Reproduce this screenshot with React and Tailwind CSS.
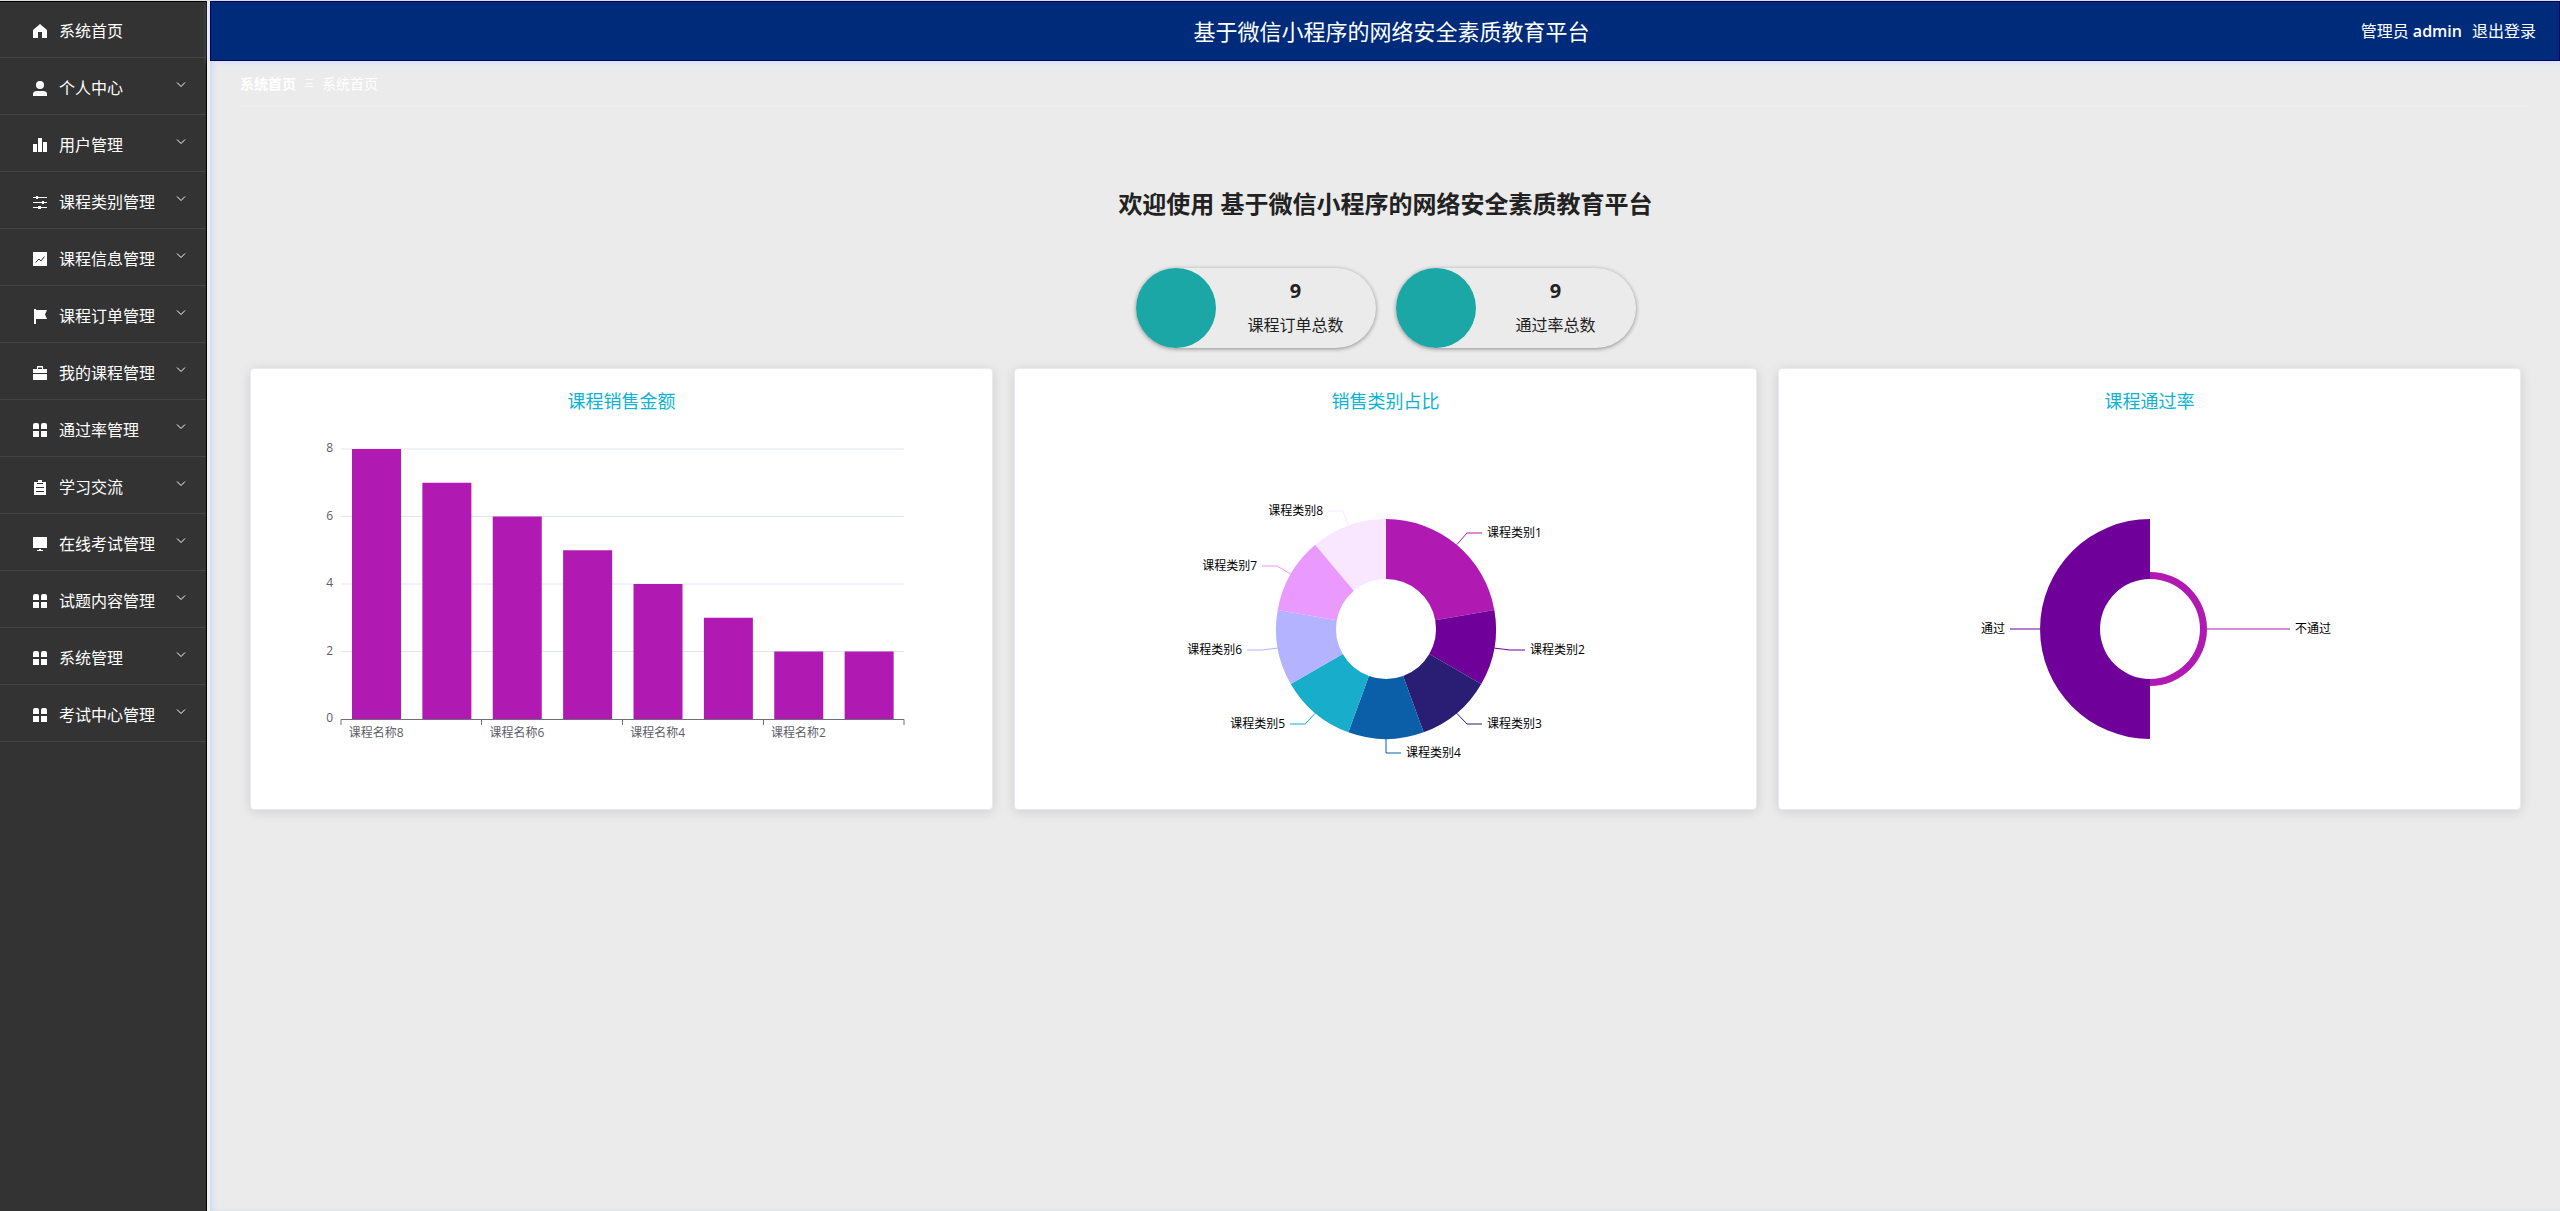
import React from 'react'

const menus = [
  { name: '系统首页', icon: 'home' },
  { name: '个人中心', icon: 'user' },
  { name: '用户管理', icon: 'histogram' },
  { name: '课程类别管理', icon: 'operation' },
  { name: '课程信息管理', icon: 'marketing' },
  { name: '课程订单管理', icon: 'flag' },
  { name: '我的课程管理', icon: 'cooperation' },
  { name: '通过率管理', icon: 'menu' },
  { name: '学习交流', icon: 'order' },
  { name: '在线考试管理', icon: 'platform' },
  { name: '试题内容管理', icon: 'menu' },
  { name: '系统管理', icon: 'menu' },
  { name: '考试中心管理', icon: 'menu' },
]

const icons = {
  home: <path d="M7 0 L14 6 V14 H9 V8 H5 V14 H0 V6 Z" />,
  user: (
    <>
      <circle cx="7" cy="4" r="4" />
      <path d="M0 15 V13 Q0 10 4 10 H10 Q14 10 14 13 V15 Z" />
    </>
  ),
  histogram: <path d="M0 6 H4 V14 H0 Z M5 0 H9 V14 H5 Z M10 4 H14 V14 H10 Z" />,
  operation: (
    <path d="M0 2 H14 V3 H0 Z M0 7 H14 V8 H0 Z M0 12 H14 V13 H0 Z M3 1 H5 V4 H3 Z M9 6 H11 V9 H9 Z M5 11 H8 V14 H5 Z" />
  ),
  marketing: (
    <>
      <path d="M0 0 H14 V14 H0 Z" />
      <path d="M2.5 10.5 L6 7 L8 9 L11.5 4.5" fill="none" stroke="#333" />
    </>
  ),
  flag: <path d="M1 0 H3 V1 H14 L12 5.5 L14 10 H3 V15 H1 Z" />,
  cooperation: (
    <path
      d="M4 3 V0 H10 V3 H14 V7 H0 V3 Z M5 1.5 V3 H9 V1.5 Z M0 8 H14 V14 H0 Z"
      fillRule="evenodd"
    />
  ),
  menu: (
    <path d="M0 6 V2 Q0 0 2 0 H4 Q6 0 6 2 V6 Z M8 6 V2 Q8 0 10 0 H12 Q14 0 14 2 V6 Z M0 8 H6 V14 H0 Z M8 8 H14 V14 H8 Z" />
  ),
  order: (
    <path
      d="M1 2 H5 V0 H9 V2 H13 V15 H1 Z M4 3 V4 H10 V3 Z M3 7 V8 H11 V7 Z M3 11 V12 H11 V11 Z"
      fillRule="evenodd"
    />
  ),
  platform: <path d="M0 0 H14 V11 H0 Z M4 13 H6 V12 H8 V13 H10 V14 H4 Z" />,
}

const stats = [
  { value: 9, label: '课程订单总数' },
  { value: 9, label: '通过率总数' },
]

const sales = [8, 7, 6, 5, 4, 3, 2, 2]

const categories = [
  { name: '课程类别1', value: 2, color: '#b01ab2', x: 446, y: 144 },
  { name: '课程类别2', value: 1, color: '#6f0099', x: 489, y: 261 },
  { name: '课程类别3', value: 1, color: '#291e73', x: 446, y: 335 },
  { name: '课程类别4', value: 1, color: '#0b5ea8', x: 365, y: 364 },
  { name: '课程类别5', value: 1, color: '#17adcb', x: 254, y: 335 },
  { name: '课程类别6', value: 1, color: '#b3b3ff', x: 211, y: 261 },
  { name: '课程类别7', value: 1, color: '#ea99ff', x: 226, y: 177 },
  { name: '课程类别8', value: 1, color: '#f9e6ff', x: 292, y: 122 },
]

const point = (r, angle) => [
  350 + r * Math.sin(angle),
  240 - r * Math.cos(angle),
]

const sector = (r0, r1, start, end) =>
  `M${point(r1, start)} A${r1} ${r1} 0 0 1 ${point(r1, end)} L${point(r0, end)} A${r0} ${r0} 0 0 0 ${point(r0, start)} Z`

function Chart({ title, children }) {
  return (
    <section className="h-[442px] min-w-0 flex-1 rounded-sm border border-[#e7eaf3] bg-white pt-5 shadow-[0_2px_12px_0_rgba(0,0,0,0.12)]">
      <h3 className="h-[24px] text-center text-[18px] leading-[24px] text-[#0db3d1]">
        {title}
      </h3>
      <svg
        viewBox="0 0 700 380"
        className="mx-auto -mt-6 w-[700px] max-w-full overflow-visible text-[12px]"
      >
        {children}
      </svg>
    </section>
  )
}

function BarChart() {
  const step = 563 / 8
  return (
    <Chart title="课程销售金额">
      {[0, 2, 4, 6, 8].map(n => {
        const y = 330 - (n * 270) / 8
        return (
          <g key={n}>
            {n > 0 && (
              <line x1="69" x2="632" y1={y} y2={y} stroke="#e0e6f1" />
            )}
            <text x="61" y={y + 3} textAnchor="end" fill="#5c5e68">
              {n}
            </text>
          </g>
        )
      })}
      {sales.map((n, i) => {
        const h = (n * 270) / 8
        return (
          <rect
            key={i}
            x={69 + step * i + 11}
            y={330 - h}
            width="49"
            height={h}
            fill="#b01ab2"
          />
        )
      })}
      <path
        d="M69 336 V330.5 H632 V336 M209.5 331 V336 M350.5 331 V336 M491.5 331 V336"
        fill="none"
        stroke="#6e7079"
      />
      {[8, 6, 4, 2].map((n, i) => (
        <text
          key={n}
          x={69 + step * (i * 2 + 0.5)}
          y="348"
          textAnchor="middle"
          fill="#5c5e68"
        >
          课程名称{n}
        </text>
      ))}
    </Chart>
  )
}

function PieChart() {
  const total = categories.reduce((sum, c) => sum + c.value, 0)
  let used = 0
  return (
    <Chart title="销售类别占比">
      {categories.map(c => {
        const start = (used / total) * Math.PI * 2
        used += c.value
        const end = (used / total) * Math.PI * 2
        const left = c.x < 350
        const dir = left ? -1 : 1
        return (
          <g key={c.name}>
            <path d={sector(50, 110, start, end)} fill={c.color} />
            <path
              d={`M${point(110, (start + end) / 2)} L${c.x - dir * 15} ${c.y} H${c.x}`}
              fill="none"
              stroke={c.color}
            />
            <text
              x={c.x + dir * 5}
              y={c.y + 4}
              textAnchor={left ? 'end' : 'start'}
              fill="#000"
            >
              {c.name}
            </text>
          </g>
        )
      })}
    </Chart>
  )
}

function PassChart() {
  return (
    <Chart title="课程通过率">
      <path d={sector(50, 57, 0, Math.PI)} fill="#b01ab2" />
      <path d={sector(50, 110, Math.PI, Math.PI * 2)} fill="#6f0099" />
      <line x1="407" x2="490" y1="240" y2="240" stroke="#b01ab2" />
      <line x1="210" x2="240" y1="240" y2="240" stroke="#6f0099" />
      <text x="495" y="244">
        不通过
      </text>
      <text x="205" y="244" textAnchor="end">
        通过
      </text>
    </Chart>
  )
}

function Sidebar() {
  return (
    <nav className="w-[207px] shrink-0 border-r border-black bg-[#333] shadow-[inset_0_1px_0_#000]">
      {menus.map((m, i) => (
        <a
          key={m.name}
          href="#"
          className="flex h-[57px] items-center border-b border-[#444] pt-1 pr-5 pl-[33px] text-[16px] text-white"
        >
          <svg
            width="14"
            height="15"
            viewBox="0 0 14 15"
            fill="currentColor"
            className="mr-3 shrink-0"
          >
            {icons[m.icon]}
          </svg>
          <span className="flex-1">{m.name}</span>
          {i > 0 && (
            <svg
              width="10"
              height="6"
              viewBox="0 0 10 6"
              fill="none"
              stroke="currentColor"
              className="mb-1.5"
            >
              <path d="M1 0.5 L5 4.5 L9 0.5" />
            </svg>
          )}
        </a>
      ))}
    </nav>
  )
}

function App() {
  return (
    <div className="flex min-h-screen border-t border-[#ddd] bg-[#ebebeb] font-['Open_Sans','Noto_Sans_CJK_SC',sans-serif] text-[#222]">
      <Sidebar />
      <div className="min-w-0 flex-1 border-l-[3px] border-[#f0f0f0] shadow-[inset_4px_0_6px_-2px_#c3d9f3]">
        <header className="grid h-[60px] grid-cols-[1fr_auto_1fr] items-center border border-[#000066] bg-[#002b7a] pr-[23px] pl-6 text-white shadow-[0_1px_6px_#ccddff]">
          <h1 className="col-start-2 pl-3 text-[22px]">
            基于微信小程序的网络安全素质教育平台
          </h1>
          <div className="flex items-center justify-end gap-[10px] text-[16px]">
            <span>
              管理员 <b className="font-semibold">admin</b>
            </span>
            <a href="#">退出登录</a>
          </div>
        </header>

        <main className="pr-[29px] pl-[30px]">
          <div className="flex h-[46px] items-center gap-2 border-b border-[#eee] text-[14px] text-white">
            <a href="#" className="font-bold">
              系统首页
            </a>
            <span className="text-[10px]">三</span>
            <span>系统首页</span>
          </div>

          <h2 className="mt-[79px] text-center text-[24px] leading-[36px] font-bold">
            欢迎使用 基于微信小程序的网络安全素质教育平台
          </h2>

          <div className="mt-[46px] flex justify-center gap-5">
            {stats.map(s => (
              <div
                key={s.label}
                className="flex h-[80px] w-[240px] rounded-full shadow-[0_1px_4px_rgba(0,0,0,0.4)]"
              >
                <div className="w-[80px] rounded-full bg-[#1ca7a7]" />
                <div className="flex-1 pt-[3px] text-center">
                  <div className="text-[20px] leading-[40px] font-bold">
                    {s.value}
                  </div>
                  <div className="text-[16px] leading-[28px]">{s.label}</div>
                </div>
              </div>
            ))}
          </div>

          <div className="mt-5 flex gap-[21px] px-[10px]">
            <BarChart />
            <PieChart />
            <PassChart />
          </div>
        </main>
      </div>
    </div>
  )
}

export default App
